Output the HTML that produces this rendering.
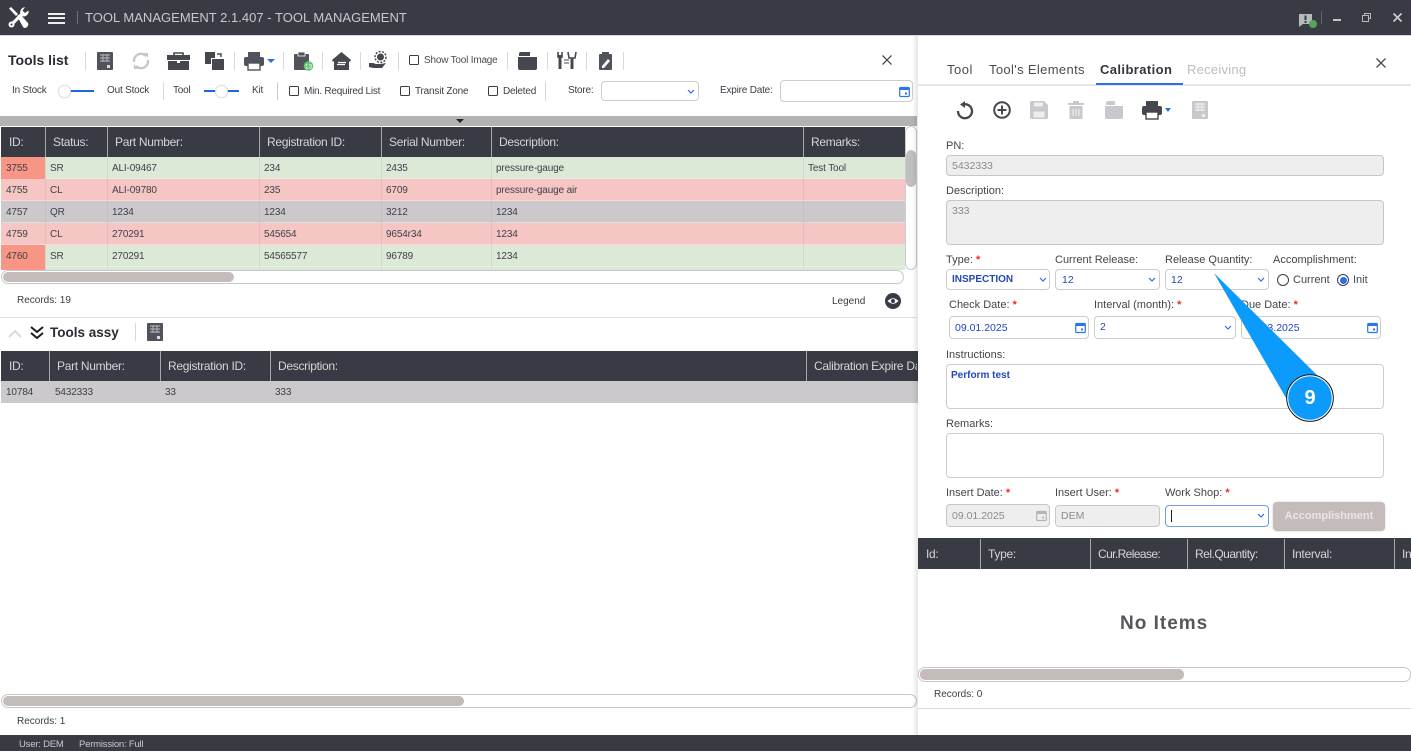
<!DOCTYPE html>
<html><head><meta charset="utf-8"><style>
*{box-sizing:border-box}
html,body{margin:0;padding:0}
body{width:1411px;height:751px;position:relative;overflow:hidden;background:#fff;font-family:"Liberation Sans",sans-serif;color:#3a3d45;font-size:11px}
.t{position:absolute;white-space:nowrap;line-height:14px}
.x{letter-spacing:-.2px}
.b{position:absolute}
.h{color:#d5d6d9;font-size:12px;letter-spacing:-.3px;line-height:14px;position:absolute;white-space:nowrap}
.c{font-size:10px;letter-spacing:-.15px;position:absolute;white-space:nowrap;line-height:12px;color:#3f4148;margin-top:1px}
.hd{position:absolute;width:1px;background:#a9a6a8}
.row{position:absolute;left:1px;width:904px;height:22px;border-bottom:1px solid rgba(255,255,255,.35)}
.vl{position:absolute;width:1px;background:rgba(120,120,120,.13)}
.sep{position:absolute;width:1px;background:#d9d9d9}
.cb{position:absolute;width:10px;height:10px;border:1.3px solid #3a3d45;border-radius:1.5px;background:#fff}
.f{position:absolute;border:1px solid #cfcbcb;border-radius:4px;background:#fff}
.dis{background:#eeeeee;border-color:#c9c5c5}
.lb{position:absolute;white-space:nowrap;font-size:11px;line-height:14px;color:#43454c}
.s{color:#f02a1a;font-weight:bold}
.v{position:absolute;white-space:nowrap;font-size:10.5px;line-height:12px;color:#2347b8}
.k{position:absolute;width:13px;height:13px;border-radius:50%;background:#fff;border:1px solid #e2e2e2;box-shadow:0 0 1px rgba(0,0,0,.2)}
svg{position:absolute;overflow:visible}
</style></head><body>

<div class="b" style="left:0;top:0;width:1411px;height:35px;background:#383b44"></div>
<div class="b" style="left:0;top:35px;width:1411px;height:1px;background:#d8d8d8"></div>
<svg style="left:8px;top:7px" width="21" height="21" viewBox="0 0 21 21"><path d="M1 1.500L3 0l7 7-2 2z" fill="#fff"/><path d="M9 9l3-2 8 9q1 2-1 4t-4 0z" fill="#fff"/><path d="M3.500 17.500L15 6" stroke="#fff" stroke-width="3.200"/><circle cx="3.500" cy="17.500" r="3" fill="#fff"/><circle cx="3.500" cy="17.500" r="1" fill="#383b44"/><path d="M20.500 3.500a5 5 0 0 1-7 5.500l-1-2A5 5 0 0 1 17 .3L14.500 3.500l2.500 2.500z" fill="#fff"/></svg>
<div class="b" style="left:48px;top:13px;width:17px;height:2px;background:#eee"></div>
<div class="b" style="left:48px;top:17px;width:17px;height:2px;background:#eee"></div>
<div class="b" style="left:48px;top:22px;width:17px;height:2px;background:#eee"></div>
<div class="b" style="left:77px;top:11px;width:1px;height:13px;background:#6d6f76"></div>
<div class="t" style="left:85px;top:11px;color:#c9cacd;font-size:13px;letter-spacing:.02px">TOOL MANAGEMENT 2.1.407 - TOOL MANAGEMENT</div>
<svg style="left:1298px;top:13px" width="22" height="18" viewBox="0 0 22 18"><path d="M1 1h13v10H5l-4 3z" fill="#b9b9ba"/><rect x="6.500" y="2.500" width="2" height="4.500" fill="#383b44"/><rect x="6.500" y="8" width="2" height="2" fill="#383b44"/><circle cx="15" cy="11" r="4" fill="#55a363"/></svg>
<div class="b" style="left:1321px;top:11px;width:1px;height:13px;background:#60636a"></div>
<div class="b" style="left:1333px;top:19px;width:8px;height:2px;background:#c4c5c7"></div>
<svg style="left:1362px;top:13px" width="9" height="9" viewBox="0 0 9 9"><path d="M2.500 2.500V.5h6v5H6.500M.5 2.500h6v6h-6z" stroke="#b8b9bb" fill="none" stroke-width="1"/></svg>
<svg style="left:1393px;top:13px" width="9" height="9" viewBox="0 0 9 9"><path d="M.5.500l8 8M8.500.500l-8 8" stroke="#d2d3d5" stroke-width="1.600"/></svg>

<div class="t" style="left:8px;top:53px;font-weight:bold;font-size:14px;color:#2a2c33">Tools list</div>
<div class="sep" style="left:85px;top:52px;height:18px"></div>
<svg style="left:97px;top:52px" width="16" height="18" viewBox="0 0 16 18"><rect width="16" height="18" rx="1" fill="#50535b"/><path d="M3 3h10M3 6h10M3 9h10M6 2v8M10 2v8" stroke="#aaa" stroke-width="1.200"/><rect x="10" y="13" width="3" height="3" fill="#ddd"/></svg>
<svg style="left:131px;top:51px" width="20" height="20" viewBox="0 0 20 20"><path d="M3 11A7 7 0 0 1 15 5M17 9A7 7 0 0 1 5 15" stroke="#c7c7c9" stroke-width="2.400" fill="none"/><path d="M13 2l4 0v5zM7 18l-4 0v-5z" fill="#c7c7c9"/></svg>
<svg style="left:167px;top:52px" width="23" height="18" viewBox="0 0 23 18"><path d="M7 4V1h9v3" stroke="#45484f" stroke-width="1.600" fill="none"/><rect y="3" width="23" height="5" fill="#45484f"/><rect x="1" y="9" width="21" height="9" fill="#45484f"/><rect x="10" y="8" width="3" height="3" fill="#fff"/></svg>
<svg style="left:205px;top:52px" width="19" height="18" viewBox="0 0 19 18"><path d="M0 0h10v6H6v6H0z" fill="#45484f"/><rect x="7" y="7" width="12" height="11" fill="#45484f"/><path d="M12 2h4v3" stroke="#45484f" stroke-width="1.500" fill="none"/></svg>
<div class="sep" style="left:234px;top:52px;height:18px"></div>
<svg style="left:244px;top:52px" width="20" height="18" viewBox="0 0 20 18"><rect x="4" y="0" width="12" height="5" fill="#50535b"/><rect y="5" width="20" height="9" rx="2" fill="#50535b"/><rect x="4" y="11" width="12" height="7" fill="#fff" stroke="#50535b" stroke-width="1.400"/></svg>
<div class="b" style="left:267px;top:59px;border-left:4px solid transparent;border-right:4px solid transparent;border-top:4px solid #2a6fe8"></div>
<div class="sep" style="left:283px;top:52px;height:18px"></div>
<svg style="left:294px;top:51px" width="20" height="20" viewBox="0 0 20 20"><rect y="3" width="15" height="16" rx="1" fill="#50535b"/><rect x="4" y="1" width="7" height="4" fill="#50535b" stroke="#fff" stroke-width=".8"/><circle cx="14.500" cy="15" r="4.800" fill="#63c777"/><text x="14.500" y="17.500" text-anchor="middle" font-size="6.500" fill="#fff" font-family="Liberation Sans">13</text></svg>
<div class="sep" style="left:322px;top:52px;height:18px"></div>
<svg style="left:332px;top:52px" width="19" height="18" viewBox="0 0 19 18"><path d="M9.500 0L19 8l-1 2-1-1v9H2V9l-1 1-1-2z" fill="#45484f"/><path d="M6 10.500h8M13 12.500H5" stroke="#fff" stroke-width="1.300"/></svg>
<div class="sep" style="left:360px;top:52px;height:18px"></div>
<svg style="left:369px;top:51px" width="19" height="19" viewBox="0 0 19 19"><circle cx="11.500" cy="6" r="5.500" fill="none" stroke="#45484f" stroke-width="1.500" stroke-dasharray="2 1.400"/><circle cx="11.500" cy="6" r="3.500" fill="#45484f"/><path d="M0 12h4l3 1h5l5-1-4 5H4l-4-1z" fill="#45484f"/></svg>
<div class="sep" style="left:398px;top:52px;height:18px"></div>
<div class="cb" style="left:409px;top:55px"></div>
<div class="t x" style="left:424px;top:54px;font-size:10px;color:#4a4c53">Show Tool Image</div>
<div class="sep" style="left:507px;top:52px;height:18px"></div>
<svg style="left:518px;top:52px" width="19" height="18" viewBox="0 0 19 18"><path d="M1 2a2 2 0 0 1 2-2h9v4H1z" fill="#45484f"/><path d="M0 5h19v11a2 2 0 0 1-2 2H2a2 2 0 0 1-2-2z" fill="#45484f"/></svg>
<div class="sep" style="left:547px;top:52px;height:18px"></div>
<svg style="left:557px;top:52px" width="20" height="18" viewBox="0 0 20 18"><path d="M3 3v14M15 6v11" stroke="#45484f" stroke-width="3"/><path d="M1 0v5h4V0M11 0l1 6h6l1-6" stroke="#45484f" stroke-width="1.600" fill="none"/><path d="M7 8h5M7 11h5" stroke="#45484f"/></svg>
<div class="sep" style="left:586px;top:52px;height:18px"></div>
<svg style="left:599px;top:52px" width="13" height="18" viewBox="0 0 13 18"><rect y="2" width="13" height="16" rx="1" fill="#50535b"/><rect x="3" y="0" width="7" height="4" fill="#50535b"/><path d="M3 14l6-7 2 2-6 7H3z" fill="#fff"/></svg>
<div class="sep" style="left:623px;top:52px;height:18px"></div>
<svg style="left:882px;top:55px" width="10" height="10" viewBox="0 0 10 10"><path d="M.5.500l9 9M9.500.500l-9 9" stroke="#4c4e55" stroke-width="1.300"/></svg>

<div class="t x" style="left:12px;top:84px;font-size:10px">In Stock</div>
<div class="b" style="left:65px;top:90px;width:29px;height:2px;background:#1f66e5"></div>
<div class="k" style="left:58px;top:85px"></div>
<div class="t x" style="left:107px;top:84px;font-size:10px">Out Stock</div>
<div class="sep" style="left:163px;top:82px;height:18px"></div>
<div class="t x" style="left:173px;top:84px;font-size:10px">Tool</div>
<div class="b" style="left:204px;top:90px;width:35px;height:2px;background:#1f66e5"></div>
<div class="k" style="left:215px;top:85px"></div>
<div class="t x" style="left:252px;top:84px;font-size:10px">Kit</div>
<div class="b" style="left:277px;top:82px;width:1px;height:18px;background:#ccc"></div>
<div class="cb" style="left:289px;top:86px"></div>
<div class="t" style="left:304px;top:85px;font-size:10px;letter-spacing:-.25px">Min. Required List</div>
<div class="cb" style="left:400px;top:86px"></div>
<div class="t x" style="left:415px;top:85px;font-size:10px">Transit Zone</div>
<div class="cb" style="left:488px;top:86px"></div>
<div class="t x" style="left:503px;top:85px;font-size:10px">Deleted</div>
<div class="sep" style="left:545px;top:82px;height:19px"></div>
<div class="t x" style="left:568px;top:84px;font-size:10px">Store:</div>
<div class="f" style="left:601px;top:81px;width:98px;height:20px"></div>
<svg style="left:687px;top:89px" width="8" height="6"><path d="M1 1l3 3 3-3" stroke="#2a6fe8" fill="none" stroke-width="1.200"/></svg>
<div class="t x" style="left:720px;top:84px;font-size:10px">Expire Date:</div>
<div class="f" style="left:780px;top:80px;width:133px;height:22px"></div>
<svg style="left:899px;top:86px" width="11" height="11" viewBox="0 0 11 11"><rect x=".7" y="1.500" width="9.600" height="9" rx="1" fill="#fff" stroke="#2a75ee" stroke-width="1.200"/><rect x=".7" y="1" width="9.600" height="3" fill="#2a75ee"/><rect x="6" y="6.500" width="2" height="2" fill="#2a75ee"/></svg>

<div class="b" style="left:0;top:116px;width:917px;height:10px;background:#b3b3b3"></div>
<div class="b" style="left:456px;top:119px;border-left:4px solid transparent;border-right:4px solid transparent;border-top:4px solid #222"></div>

<div class="b" style="left:1px;top:127px;width:904px;height:30px;background:#383b44"></div>
<div class="hd" style="left:45px;top:127px;height:30px"></div>
<div class="hd" style="left:107px;top:127px;height:30px"></div>
<div class="hd" style="left:259px;top:127px;height:30px"></div>
<div class="hd" style="left:381px;top:127px;height:30px"></div>
<div class="hd" style="left:491px;top:127px;height:30px"></div>
<div class="hd" style="left:803px;top:127px;height:30px"></div>
<div class="h" style="left:9px;top:135px">ID:</div>
<div class="h" style="left:53px;top:135px">Status:</div>
<div class="h" style="left:115px;top:135px">Part Number:</div>
<div class="h" style="left:267px;top:135px">Registration ID:</div>
<div class="h" style="left:389px;top:135px">Serial Number:</div>
<div class="h" style="left:499px;top:135px">Description:</div>
<div class="h" style="left:811px;top:135px">Remarks:</div>

<div class="row" style="top:157px;background:#dde9d7"></div>
<div class="row" style="top:179px;background:#f6c6c4"></div>
<div class="row" style="top:201px;background:#cbc9cc"></div>
<div class="row" style="top:223px;background:#f6c6c4"></div>
<div class="row" style="top:245px;background:#dde9d7"></div>
<div class="b" style="left:1px;top:267px;width:904px;height:3px;background:#dde9d7"></div>
<div class="b" style="left:1px;top:157px;width:44px;height:22px;background:#f99584"></div>
<div class="b" style="left:1px;top:245px;width:44px;height:25px;background:#f99584"></div>
<div class="vl" style="left:45px;top:157px;height:113px"></div>
<div class="vl" style="left:107px;top:157px;height:113px"></div>
<div class="vl" style="left:259px;top:157px;height:113px"></div>
<div class="vl" style="left:381px;top:157px;height:113px"></div>
<div class="vl" style="left:491px;top:157px;height:113px"></div>
<div class="vl" style="left:803px;top:157px;height:113px"></div>

<div class="c" style="left:6px;top:162px">3755</div><div class="c" style="left:50px;top:162px">SR</div><div class="c" style="left:112px;top:162px">ALI-09467</div><div class="c" style="left:264px;top:162px">234</div><div class="c" style="left:386px;top:162px">2435</div><div class="c" style="left:496px;top:162px">pressure-gauge</div><div class="c" style="left:808px;top:162px">Test Tool</div>
<div class="c" style="left:6px;top:184px">4755</div><div class="c" style="left:50px;top:184px">CL</div><div class="c" style="left:112px;top:184px">ALI-09780</div><div class="c" style="left:264px;top:184px">235</div><div class="c" style="left:386px;top:184px">6709</div><div class="c" style="left:496px;top:184px">pressure-gauge air</div>
<div class="c" style="left:6px;top:206px">4757</div><div class="c" style="left:50px;top:206px">QR</div><div class="c" style="left:112px;top:206px">1234</div><div class="c" style="left:264px;top:206px">1234</div><div class="c" style="left:386px;top:206px">3212</div><div class="c" style="left:496px;top:206px">1234</div>
<div class="c" style="left:6px;top:228px">4759</div><div class="c" style="left:50px;top:228px">CL</div><div class="c" style="left:112px;top:228px">270291</div><div class="c" style="left:264px;top:228px">545654</div><div class="c" style="left:386px;top:228px">9654r34</div><div class="c" style="left:496px;top:228px">1234</div>
<div class="c" style="left:6px;top:250px">4760</div><div class="c" style="left:50px;top:250px">SR</div><div class="c" style="left:112px;top:250px">270291</div><div class="c" style="left:264px;top:250px">54565577</div><div class="c" style="left:386px;top:250px">96789</div><div class="c" style="left:496px;top:250px">1234</div>

<div class="b" style="left:905px;top:126px;width:12px;height:144px;background:#fff;border:1px solid #ccc;border-radius:6px"></div>
<div class="b" style="left:906px;top:150px;width:10px;height:37px;background:#c0bfbf;border-radius:5px"></div>
<div class="b" style="left:1px;top:270px;width:903px;height:14px;border:1px solid #c8c8c8;border-radius:7px;background:#fff"></div>
<div class="b" style="left:3px;top:272px;width:231px;height:10px;background:#c4bcbb;border-radius:5px"></div>

<div class="t" style="left:17px;top:294px;font-size:10px">Records: 19</div>
<div class="t" style="left:832px;top:295px;font-size:10px">Legend</div>
<svg style="left:885px;top:293px" width="16" height="16" viewBox="0 0 16 16"><circle cx="8" cy="8" r="8" fill="#383b44"/><path d="M2.500 8Q8 2.500 13.500 8Q8 13.500 2.500 8z" fill="#fff"/><circle cx="8" cy="8" r="2" fill="#383b44"/></svg>
<div class="b" style="left:0;top:317px;width:917px;height:1px;background:#e0e0e0"></div>

<svg style="left:8px;top:329px" width="14" height="9"><path d="M1 8l6-6 6 6" stroke="#d6d6d6" stroke-width="1.800" fill="none"/></svg>
<svg style="left:30px;top:326px" width="14" height="14"><path d="M1 1l6 5 6-5M1 7l6 5 6-5" stroke="#1c1c20" stroke-width="2" fill="none"/></svg>
<div class="t" style="left:50px;top:326px;font-weight:bold;font-size:13.500px;color:#2a2c33">Tools assy</div>
<div class="sep" style="left:135px;top:323px;height:18px"></div>
<svg style="left:147px;top:323px" width="16" height="18" viewBox="0 0 16 18"><rect width="16" height="18" rx="1" fill="#50535b"/><path d="M3 3h10M3 6h10M3 9h10M6 2v8M10 2v8" stroke="#aaa" stroke-width="1.200"/><rect x="10" y="13" width="3" height="3" fill="#ddd"/></svg>

<div class="b" style="left:1px;top:351px;width:917px;height:30px;background:#383b44"></div>
<div class="hd" style="left:49px;top:351px;height:30px"></div>
<div class="hd" style="left:160px;top:351px;height:30px"></div>
<div class="hd" style="left:270px;top:351px;height:30px"></div>
<div class="hd" style="left:806px;top:351px;height:30px"></div>
<div class="h" style="left:9px;top:359px">ID:</div>
<div class="h" style="left:57px;top:359px">Part Number:</div>
<div class="h" style="left:168px;top:359px">Registration ID:</div>
<div class="h" style="left:278px;top:359px">Description:</div>
<div class="h" style="left:814px;top:359px;width:103px;overflow:hidden">Calibration Expire Date</div>
<div class="b" style="left:1px;top:381px;width:917px;height:22px;background:#cbc9cc"></div>
<div class="c" style="left:6px;top:386px">10784</div><div class="c" style="left:55px;top:386px">5432333</div><div class="c" style="left:165px;top:386px">33</div><div class="c" style="left:275px;top:386px">333</div>

<div class="b" style="left:1px;top:694px;width:916px;height:14px;border:1px solid #c8c8c8;border-radius:7px;background:#fff"></div>
<div class="b" style="left:3px;top:696px;width:461px;height:10px;background:#c4bcbb;border-radius:5px"></div>
<div class="t" style="left:17px;top:715px;font-size:10px">Records: 1</div>

<div class="b" style="left:0;top:735px;width:1411px;height:16px;background:#383b44"></div>
<div class="t" style="left:19px;top:738px;font-size:9.500px;letter-spacing:-.2px;color:#c9cacd">User: DEM</div>
<div class="t" style="left:79px;top:738px;font-size:9.500px;letter-spacing:-.2px;color:#c9cacd">Permission: Full</div>

<!-- right panel -->
<div class="b" style="left:912px;top:36px;width:6px;height:699px;background:linear-gradient(90deg,rgba(0,0,0,0),rgba(0,0,0,.1))"></div>
<div class="b" style="left:918px;top:36px;width:493px;height:699px;background:#fff"></div>
<div class="t" style="left:947px;top:63px;font-size:13px;letter-spacing:.5px;color:#4a4c53">Tool</div>
<div class="t" style="left:989px;top:63px;font-size:13px;letter-spacing:.35px;color:#4a4c53">Tool's Elements</div>
<div class="t" style="left:1100px;top:63px;font-size:13px;letter-spacing:.4px;font-weight:bold;color:#33353c">Calibration</div>
<div class="t" style="left:1187px;top:63px;font-size:13px;letter-spacing:.25px;color:#bdbdbf">Receiving</div>
<div class="b" style="left:918px;top:84px;width:493px;height:2px;background:#e8e8e8"></div>
<div class="b" style="left:1096px;top:83px;width:87px;height:2px;background:#2a6fe8"></div>
<svg style="left:1376px;top:58px" width="10" height="10" viewBox="0 0 10 10"><path d="M.5.500l9 9M9.500.500l-9 9" stroke="#4c4e55" stroke-width="1.300"/></svg>

<svg style="left:956px;top:101px" width="18" height="19" viewBox="0 0 18 19"><path d="M7 3.500A7 7 0 1 1 2 10" stroke="#45484f" stroke-width="2.300" fill="none"/><path d="M9 0v7L4 3.500z" fill="#45484f"/></svg>
<svg style="left:993px;top:101px" width="18" height="18" viewBox="0 0 18 18"><circle cx="9" cy="9" r="7.800" stroke="#45484f" stroke-width="2" fill="none"/><path d="M4.500 9h9M9 4.500v9" stroke="#45484f" stroke-width="2"/></svg>
<svg style="left:1030px;top:101px" width="18" height="18" viewBox="0 0 18 18"><path d="M2 0h12l4 4v12a2 2 0 0 1-2 2H2a2 2 0 0 1-2-2V2a2 2 0 0 1 2-2z" fill="#c8c8cf"/><rect x="4" y="1.500" width="9" height="4" fill="#eee"/><rect x="3.500" y="10.500" width="11" height="6" fill="#eee"/></svg>
<svg style="left:1068px;top:101px" width="16" height="18" viewBox="0 0 16 18"><rect y="2" width="16" height="2" fill="#c8c8cf"/><rect x="5" width="6" height="2" fill="#c8c8cf"/><path d="M1.500 5h13v13h-13z" fill="#c8c8cf"/><path d="M5 8v7M8 8v7M11 8v7" stroke="#eee" stroke-width="1.200"/></svg>
<svg style="left:1105px;top:101px" width="18" height="18" viewBox="0 0 18 18"><path d="M1 2a2 2 0 0 1 2-2h7v4H1z" fill="#c8c8cf"/><path d="M0 5h18v11a2 2 0 0 1-2 2H2a2 2 0 0 1-2-2z" fill="#c8c8cf"/></svg>
<svg style="left:1142px;top:101px" width="20" height="18" viewBox="0 0 20 18"><rect x="4" y="0" width="12" height="5" fill="#45484f"/><rect y="5" width="20" height="9" rx="2" fill="#45484f"/><rect x="4" y="11" width="12" height="7" fill="#fff" stroke="#45484f" stroke-width="1.400"/></svg>
<div class="b" style="left:1165px;top:108px;border-left:3.500px solid transparent;border-right:3.500px solid transparent;border-top:4px solid #2a6fe8"></div>
<svg style="left:1192px;top:101px" width="16" height="18" viewBox="0 0 16 18"><rect width="16" height="18" rx="1" fill="#c8c8cf"/><path d="M3 3h10M3 6h10M3 9h10M6 2v8M10 2v8" stroke="#eee" stroke-width="1.200"/><rect x="10" y="13" width="3" height="3" fill="#eee"/></svg>

<div class="lb" style="left:946px;top:139px">PN:</div>
<div class="f dis" style="left:946px;top:155px;width:438px;height:21px"></div>
<div class="t" style="left:952px;top:160px;font-size:10.500px;line-height:12px;color:#8b8b8e">5432333</div>
<div class="lb" style="left:946px;top:184px">Description:</div>
<div class="f dis" style="left:946px;top:200px;width:438px;height:45px"></div>
<div class="t" style="left:952px;top:205px;font-size:10.500px;line-height:12px;color:#8b8b8e">333</div>

<div class="lb" style="left:946px;top:253px">Type: <span class="s">*</span></div>
<div class="f" style="left:946px;top:269px;width:104px;height:21px"></div>
<div class="v" style="left:952px;top:274px;font-weight:bold;font-size:10px">INSPECTION</div>
<svg style="left:1039px;top:277px" width="8" height="6"><path d="M1 1l3 3 3-3" stroke="#2a6fe8" fill="none" stroke-width="1.200"/></svg>
<div class="lb" style="left:1055px;top:253px">Current Release:</div>
<div class="f" style="left:1055px;top:269px;width:105px;height:21px"></div>
<div class="v" style="left:1062px;top:274px">12</div>
<svg style="left:1148px;top:277px" width="8" height="6"><path d="M1 1l3 3 3-3" stroke="#2a6fe8" fill="none" stroke-width="1.200"/></svg>
<div class="lb" style="left:1165px;top:253px">Release Quantity:</div>
<div class="f" style="left:1165px;top:269px;width:104px;height:21px"></div>
<div class="v" style="left:1171px;top:274px">12</div>
<svg style="left:1257px;top:277px" width="8" height="6"><path d="M1 1l3 3 3-3" stroke="#2a6fe8" fill="none" stroke-width="1.200"/></svg>
<div class="lb" style="left:1273px;top:253px">Accomplishment:</div>
<div class="b" style="left:1277px;top:274px;width:12px;height:12px;border-radius:50%;border:1.300px solid #3a3d45"></div>
<div class="lb" style="left:1293px;top:273px">Current</div>
<div class="b" style="left:1337px;top:274px;width:12px;height:12px;border-radius:50%;border:1.300px solid #3a3d45"></div>
<div class="b" style="left:1339.500px;top:276.500px;width:7px;height:7px;border-radius:50%;background:#2a6fe8"></div>
<div class="lb" style="left:1353px;top:273px">Init</div>

<div class="lb" style="left:949px;top:298px">Check Date: <span class="s">*</span></div>
<div class="f" style="left:949px;top:316px;width:140px;height:23px"></div>
<div class="v" style="left:955px;top:322px">09.01.2025</div>
<svg style="left:1075px;top:322px" width="11" height="11" viewBox="0 0 11 11"><rect x=".7" y="1.500" width="9.600" height="9" rx="1" fill="#fff" stroke="#2a75ee" stroke-width="1.200"/><rect x=".7" y="1" width="9.600" height="3" fill="#2a75ee"/><rect x="6" y="6.500" width="2" height="2" fill="#2a75ee"/></svg>
<div class="lb" style="left:1094px;top:298px">Interval (month): <span class="s">*</span></div>
<div class="f" style="left:1094px;top:316px;width:142px;height:23px"></div>
<div class="v" style="left:1100px;top:321px">2</div>
<svg style="left:1224px;top:325px" width="8" height="6"><path d="M1 1l3 3 3-3" stroke="#2a6fe8" fill="none" stroke-width="1.200"/></svg>
<div class="lb" style="left:1241px;top:298px">Due Date: <span class="s">*</span></div>
<div class="f" style="left:1241px;top:316px;width:140px;height:23px"></div>
<div class="v" style="left:1247px;top:322px">09.03.2025</div>
<svg style="left:1367px;top:322px" width="11" height="11" viewBox="0 0 11 11"><rect x=".7" y="1.500" width="9.600" height="9" rx="1" fill="#fff" stroke="#2a75ee" stroke-width="1.200"/><rect x=".7" y="1" width="9.600" height="3" fill="#2a75ee"/><rect x="6" y="6.500" width="2" height="2" fill="#2a75ee"/></svg>

<div class="lb" style="left:946px;top:348px">Instructions:</div>
<div class="f" style="left:946px;top:364px;width:438px;height:45px"></div>
<div class="v" style="left:951px;top:370px;font-weight:bold;font-size:10px">Perform test</div>
<div class="lb" style="left:946px;top:417px">Remarks:</div>
<div class="f" style="left:946px;top:433px;width:438px;height:45px"></div>

<div class="lb" style="left:946px;top:486px">Insert Date: <span class="s">*</span></div>
<div class="f dis" style="left:946px;top:504px;width:104px;height:23px"></div>
<div class="t" style="left:952px;top:510px;font-size:10.500px;line-height:12px;color:#8b8b8e">09.01.2025</div>
<svg style="left:1036px;top:510px" width="11" height="11" viewBox="0 0 11 11"><rect x=".7" y="1.500" width="9.600" height="9" rx="1" fill="none" stroke="#b5b5b5" stroke-width="1.200"/><rect x=".7" y="1" width="9.600" height="3" fill="#b5b5b5"/><rect x="6" y="6.500" width="2" height="2" fill="#b5b5b5"/></svg>
<div class="lb" style="left:1055px;top:486px">Insert User: <span class="s">*</span></div>
<div class="f dis" style="left:1055px;top:505px;width:105px;height:22px"></div>
<div class="t" style="left:1061px;top:510px;font-size:10.500px;line-height:12px;color:#8b8b8e">DEM</div>
<div class="lb" style="left:1165px;top:486px">Work Shop: <span class="s">*</span></div>
<div class="f" style="left:1165px;top:505px;width:104px;height:22px;border-color:#6b9cf0"></div>
<div class="b" style="left:1171px;top:510px;width:1px;height:12px;background:#222"></div>
<svg style="left:1257px;top:513px" width="8" height="6"><path d="M1 1l3 3 3-3" stroke="#2a6fe8" fill="none" stroke-width="1.200"/></svg>
<div class="b" style="left:1273px;top:502px;width:112px;height:29px;background:#c4bcbb;border-radius:4px;box-shadow:0 0 2px rgba(0,0,0,.2)"></div>
<div class="t" style="left:1273px;top:509px;width:112px;text-align:center;font-size:11px;font-weight:bold;color:#e9e6e6">Accomplishment</div>

<div class="b" style="left:918px;top:538px;width:493px;height:31px;background:#383b44"></div>
<div class="hd" style="left:980px;top:539px;height:30px"></div>
<div class="hd" style="left:1090px;top:539px;height:30px"></div>
<div class="hd" style="left:1187px;top:539px;height:30px"></div>
<div class="hd" style="left:1284px;top:539px;height:30px"></div>
<div class="hd" style="left:1394px;top:539px;height:30px"></div>
<div class="h" style="left:926px;top:547px">Id:</div>
<div class="h" style="left:988px;top:547px">Type:</div>
<div class="h" style="left:1098px;top:547px;letter-spacing:-.6px">Cur.Release:</div>
<div class="h" style="left:1195px;top:547px;letter-spacing:-.5px">Rel.Quantity:</div>
<div class="h" style="left:1292px;top:547px">Interval:</div>
<div class="h" style="left:1402px;top:547px;width:9px;overflow:hidden">In</div>

<div class="t" style="left:1120px;top:613px;font-size:19px;line-height:22px;letter-spacing:1px;font-weight:bold;color:#55575d">No Items</div>
<div class="b" style="left:918px;top:667px;width:493px;height:15px;border:1px solid #c8c8c8;border-radius:7px;background:#fff"></div>
<div class="b" style="left:920px;top:669px;width:264px;height:11px;background:#c4bcbb;border-radius:5px"></div>
<div class="t" style="left:934px;top:688px;font-size:10px">Records: 0</div>
<div class="b" style="left:918px;top:708px;width:493px;height:1px;background:#ddd"></div>

<!-- callout -->
<svg style="left:1200px;top:260px" width="150" height="170" viewBox="0 0 150 170"><path d="M14 13L118 116 86 138z" fill="#0d9bfb"/><circle cx="110" cy="138" r="22.500" fill="#0d9bfb" stroke="#fff" stroke-width="1.400"/><circle cx="110" cy="138" r="23.300" fill="none" stroke="#111" stroke-width="1"/></svg>
<div class="t" style="left:1290px;top:386px;width:40px;text-align:center;font-size:20px;line-height:24px;font-weight:bold;color:#fff">9</div>

</body></html>
